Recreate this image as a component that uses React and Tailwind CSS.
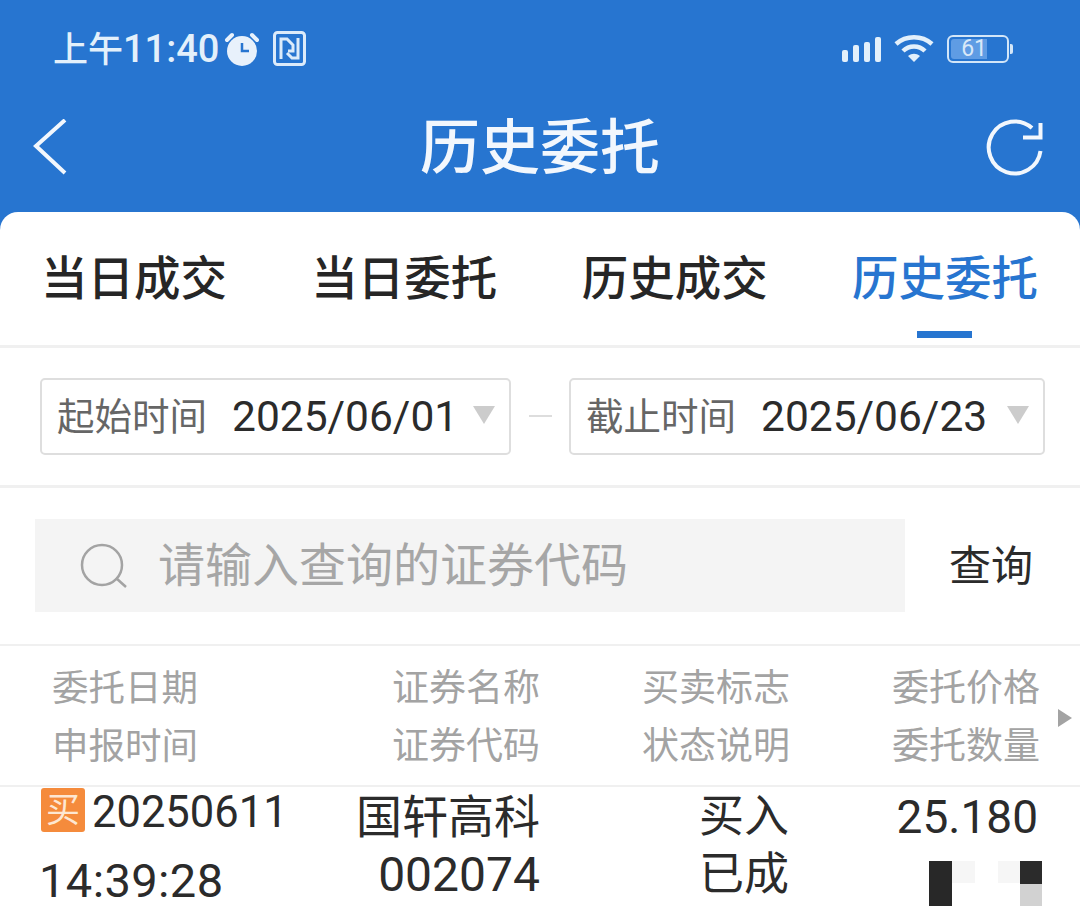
import React from "react";

const cjk = "font-['Roboto','Noto_Sans_CJK_SC',sans-serif]";

const tabs = ["当日成交", "当日委托", "历史成交", "历史委托"];

const headers = [
  { top: "证券名称", bottom: "证券代码", width: "w-[342px]" },
  { top: "买卖标志", bottom: "状态说明", width: "w-[250px]" },
  { top: "委托价格", bottom: "委托数量", width: "w-[250px]" },
];

function StatusIcons() {
  return (
    <div className="flex items-center">
      <svg width="42" height="28" viewBox="0 0 42 28" className="text-[#e3f0fb]" fill="currentColor">
        <rect x="1" y="15" width="6" height="12" rx="2" />
        <rect x="12" y="10" width="6" height="17" rx="2" />
        <rect x="23" y="7" width="6" height="20" rx="2" />
        <rect x="34" y="2" width="6" height="25" rx="2" />
      </svg>
      <svg width="40" height="30" viewBox="0 0 40 30" className="ml-[11px] text-[#e3f0fb]" fill="none" stroke="currentColor" strokeWidth="4.5">
        <path d="M2 10 C12 1 28 1 38 10" />
        <path d="M9 17 C15 11 25 11 31 17" />
        <path d="M14 22 L20 28 L26 22 C22 19 18 19 14 22 Z" fill="currentColor" stroke="none" />
      </svg>
      <div className="ml-[13px] flex items-center">
        <div className="flex h-[28px] w-[62px] rounded-[6px] border-2 border-[#d3e6f8] p-[2px]">
          <div className="flex h-full w-[36px] items-center justify-end rounded-l-[3px] bg-[#5f9ce4] font-['Roboto',sans-serif] text-[23px] leading-none text-[#d8e8f8]">
            61
          </div>
        </div>
        <div className="ml-[1px] h-[10px] w-[3px] rounded-r-[2px] bg-[#d3e6f8]" />
      </div>
    </div>
  );
}

function Caret() {
  return <div className="h-0 w-0 border-x-[11px] border-t-[18px] border-x-transparent border-t-[#cccccc]" />;
}

function DateBox({ label, value, width, gap }) {
  return (
    <div className={`flex h-[77px] items-center rounded-[5px] border-2 border-[#dedede] pl-[15px] pr-[14px] ${width}`}>
      <span className="pt-[3px] text-[37.5px] leading-none text-[#666666]">{label}</span>
      <span className={`pt-[3px] text-[42.5px] leading-none text-[#2b2b2b] ${gap}`}>{value}</span>
      <div className="mb-[3px] ml-auto">
        <Caret />
      </div>
    </div>
  );
}

export default function App() {
  return (
    <div className={`flex h-[916px] w-[1080px] flex-col overflow-hidden bg-[#2775d0] ${cjk}`}>
      {/* status bar */}
      <div className="flex h-[97px] shrink-0 items-center justify-between pl-[53px] pr-[67px]">
        <div className="flex items-center text-[#e3f0fb]">
          <span className="pt-[1px] text-[35px] font-medium leading-none">
            上午<span className="text-[38px]">11:40</span>
          </span>
          <svg width="36" height="36" viewBox="0 0 36 36" className="ml-[5px]">
            <circle cx="18" cy="20" r="15" fill="#e8f1fb" />
            <path d="M3 9 L8 4 M33 9 L28 4" stroke="#e8f1fb" strokeWidth="4" strokeLinecap="round" />
            <path d="M18 12 V20 H25" fill="none" stroke="#2775d0" strokeWidth="2.5" />
          </svg>
          <svg width="33" height="35" viewBox="0 0 33 35" className="ml-[13px]" fill="none" stroke="#dcebfa" strokeWidth="3">
            <rect x="1.5" y="1.5" width="30" height="32" rx="3" />
            <path d="M8 28 V8 H14 L20 14 V20 H15" />
            <path d="M25 7 V27 H19 L14 22" />
          </svg>
        </div>
        <StatusIcons />
      </div>

      {/* nav */}
      <div className="flex h-[115px] shrink-0 items-center pb-[16px] pl-[33px] pr-[37px]">
        <div className="w-[63px]">
          <svg width="34" height="56" viewBox="0 0 34 56" fill="none" stroke="#f2f7fd" strokeWidth="4">
            <path d="M32 1 L3 27 L32 54" />
          </svg>
        </div>
        <span className="flex-1 pl-[1px] pt-[4px] text-center text-[60px] font-medium leading-none text-[#f2f7fd]">历史委托</span>
        <svg width="60" height="60" viewBox="0 0 60 60" fill="none" stroke="#f2f7fd" strokeWidth="4">
          <path d="M57.5 34 A26 26 0 1 1 49 11" />
          <path d="M57.5 6 V20.5 H40" />
        </svg>
      </div>

      {/* card */}
      <div className="flex min-h-0 flex-1 flex-col rounded-t-[18px] bg-white">
        <div className="flex h-[136px] shrink-0 justify-between border-b-[3px] border-[#f0f0f0] pl-[41px] pr-[42px] pt-[39px]">
          {tabs.map((tab, i) => (
            <div key={tab} className="flex flex-col items-center">
              <span className={`text-[46.5px] font-medium leading-[56px] ${i === 3 ? "text-[#2775d0]" : "text-[#262626]"}`}>
                {tab}
              </span>
              {i === 3 && <div className="mt-[24px] h-[7px] w-[55px] bg-[#2775d0]" />}
            </div>
          ))}
        </div>

        <div className="flex h-[140px] shrink-0 items-center border-b-[3px] border-[#f0f0f0] pb-[1px] pl-[40px]">
          <DateBox label="起始时间" value="2025/06/01" width="w-[471px]" gap="ml-[25px]" />
          <div className="ml-[18px] mr-[17px] h-[2px] w-[23px] bg-[#dddddd]" />
          <DateBox label="截止时间" value="2025/06/23" width="w-[476px]" gap="ml-[25px]" />
        </div>

        <div className="flex h-[158px] shrink-0 items-center border-b-2 border-[#f0f0f0] pb-[1px] pl-[35px] pr-[47px]">
          <div className="flex h-[93px] w-[870px] items-center bg-[#f4f4f4] pl-[45px]">
            <svg width="48" height="46" viewBox="0 0 48 46" fill="none" stroke="#a3a3a3" strokeWidth="2.5">
              <circle cx="22" cy="22" r="20" />
              <path d="M36 35 L46 44" />
            </svg>
            <span className="ml-[30px] text-[47px] leading-none text-[#a6a6a6]">请输入查询的证券代码</span>
          </div>
          <span className="ml-auto pt-[2px] text-[42px] leading-none text-[#2b2b2b]">查询</span>
        </div>

        <div className="flex h-[141px] shrink-0 items-center border-b-2 border-[#f0f0f0] pl-[52px] pt-[4px] text-[37px] leading-[58px] text-[#a3a3a3]">
          <div className="w-[146px] whitespace-nowrap text-[36.5px]">
            <div>委托日期</div>
            <div>申报时间</div>
          </div>
          {headers.map((h) => (
            <div key={h.top} className={`whitespace-nowrap text-right ${h.width}`}>
              <div>{h.top}</div>
              <div>{h.bottom}</div>
            </div>
          ))}
          <div className="ml-[18px] h-0 w-0 border-y-[9px] border-l-[14px] border-y-transparent border-l-[#a3a3a3]" />
        </div>

        <div className="flex pl-[41px] text-[#2b2b2b]">
          <div className="w-[243px]">
            <div className="flex items-start whitespace-nowrap">
              <span className="mt-[1px] flex h-[44px] w-[44px] shrink-0 items-center justify-center rounded-[3px] bg-[#f58b3c] text-[34px] leading-none text-[#fde7d2]">
                买
              </span>
              <span className="ml-[7px] text-[43.5px] leading-[52px]">20250611</span>
            </div>
            <div className="-ml-[2px] mt-[13px] whitespace-nowrap text-[47px] leading-[58px] tracking-[0.4px]">14:39:28</div>
          </div>
          <div className="w-[256px] pt-[1px] text-right leading-[58px]">
            <div className="text-[46px]">国轩高科</div>
            <div className="text-[48px]">002074</div>
          </div>
          <div className="w-[249px] pt-[1px] text-right text-[45px] leading-[58px]">
            <div>买入</div>
            <div>已成</div>
          </div>
          <div className="w-[251px] pt-[1px] text-right leading-[58px]">
            <div className="pr-[2px] text-[46px]">25.180</div>
            <div className="-mr-[2px] mt-[15px] flex justify-end">
              <div className="h-[45px] w-[23px] bg-[#282828]" />
              <div className="h-[22px] w-[23px] bg-[#f6f6f6]" />
              <div className="w-[23px]" />
              <div className="h-[22px] w-[22px] bg-[#f6f6f6]" />
              <div className="flex h-[45px] w-[22px] flex-col">
                <div className="h-[23px] bg-[#2b2b2b]" />
                <div className="h-[22px] bg-[#d2d2d2]" />
              </div>
            </div>
          </div>
        </div>
      </div>
    </div>
  );
}
